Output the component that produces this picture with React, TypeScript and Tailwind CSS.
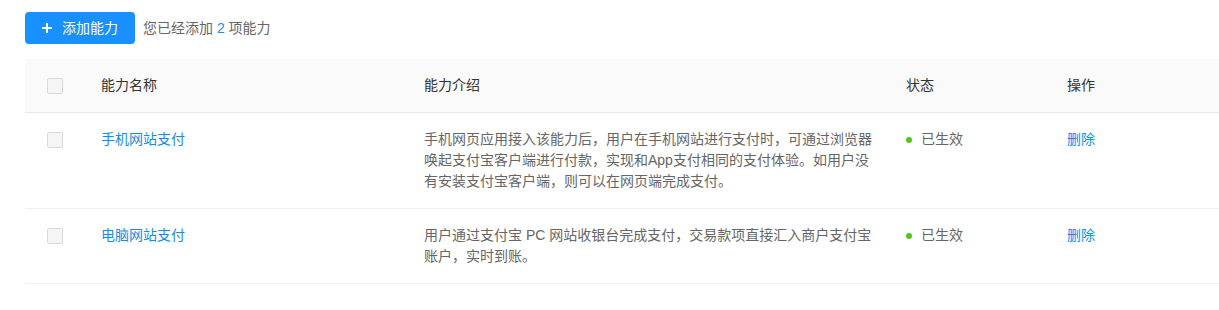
import React from 'react';

const rows = [
  {
    id: 'wap',
    name: '手机网站支付',
    desc: '手机网页应用接入该能力后，用户在手机网站进行支付时，可通过浏览器唤起支付宝客户端进行付款，实现和App支付相同的支付体验。如用户没有安装支付宝客户端，则可以在网页端完成支付。',
    status: '已生效',
  },
  {
    id: 'pc',
    name: '电脑网站支付',
    desc: '用户通过支付宝 PC 网站收银台完成支付，交易款项直接汇入商户支付宝账户，实时到账。',
    status: '已生效',
  },
];

const cols = 'grid grid-cols-[60px_323px_482px_161px_1fr]';

function Checkbox() {
  return <span className="block w-4 h-4 rounded-[2px] border border-[#d9d9d9] bg-[#f5f5f5]" />;
}

export default function App() {
  return (
    <div
      className="pl-[25px] pt-3 bg-white min-h-[310px] text-[14px] leading-[21px]"
      style={{ fontFamily: '"Liberation Sans", "Noto Sans CJK SC", sans-serif' }}
    >
      <div className="flex items-center">
        <button className="flex items-center h-8 w-[110px] pl-[17px] rounded-[4px] bg-[#1890ff] text-white">
          <svg width="10" height="10" viewBox="0 0 10 10" className="mr-[10px]">
            <path d="M5 0v10M0 5h10" stroke="white" strokeWidth="2" />
          </svg>
          添加能力
        </button>
        <span className="ml-2 text-[#666]">
          您已经添加 <span className="text-[#108ee9]">2</span> 项能力
        </span>
      </div>

      <div className="mt-[15px]">
        <div className={`${cols} bg-[#fafafa] border-b border-[#e9e9e9] text-[#333]`}>
          <div className="pl-[22px] py-4 flex items-center">
            <Checkbox />
          </div>
          <div className="px-4 py-4">能力名称</div>
          <div className="px-4 py-4">能力介绍</div>
          <div className="px-4 py-4">状态</div>
          <div className="px-4 py-4">操作</div>
        </div>

        {rows.map((r) => (
          <div key={r.id} className={`${cols} border-b border-[#f0f0f0]`}>
            <div className="pl-[22px] py-4">
              <div className="h-[21px] flex items-center">
                <Checkbox />
              </div>
            </div>
            <div className="px-4 py-4 text-[#108ee9]">{r.name}</div>
            <div className="px-4 py-4 text-[#666]">{r.desc}</div>
            <div className="px-4 py-4 flex items-start text-[#666]">
              <span className="h-[21px] flex items-center">
                <span className="w-1.5 h-1.5 rounded-full bg-[#52c41a] mr-[9px]" />
              </span>
              {r.status}
            </div>
            <div className="px-4 py-4 text-[#108ee9]">删除</div>
          </div>
        ))}
      </div>
    </div>
  );
}
